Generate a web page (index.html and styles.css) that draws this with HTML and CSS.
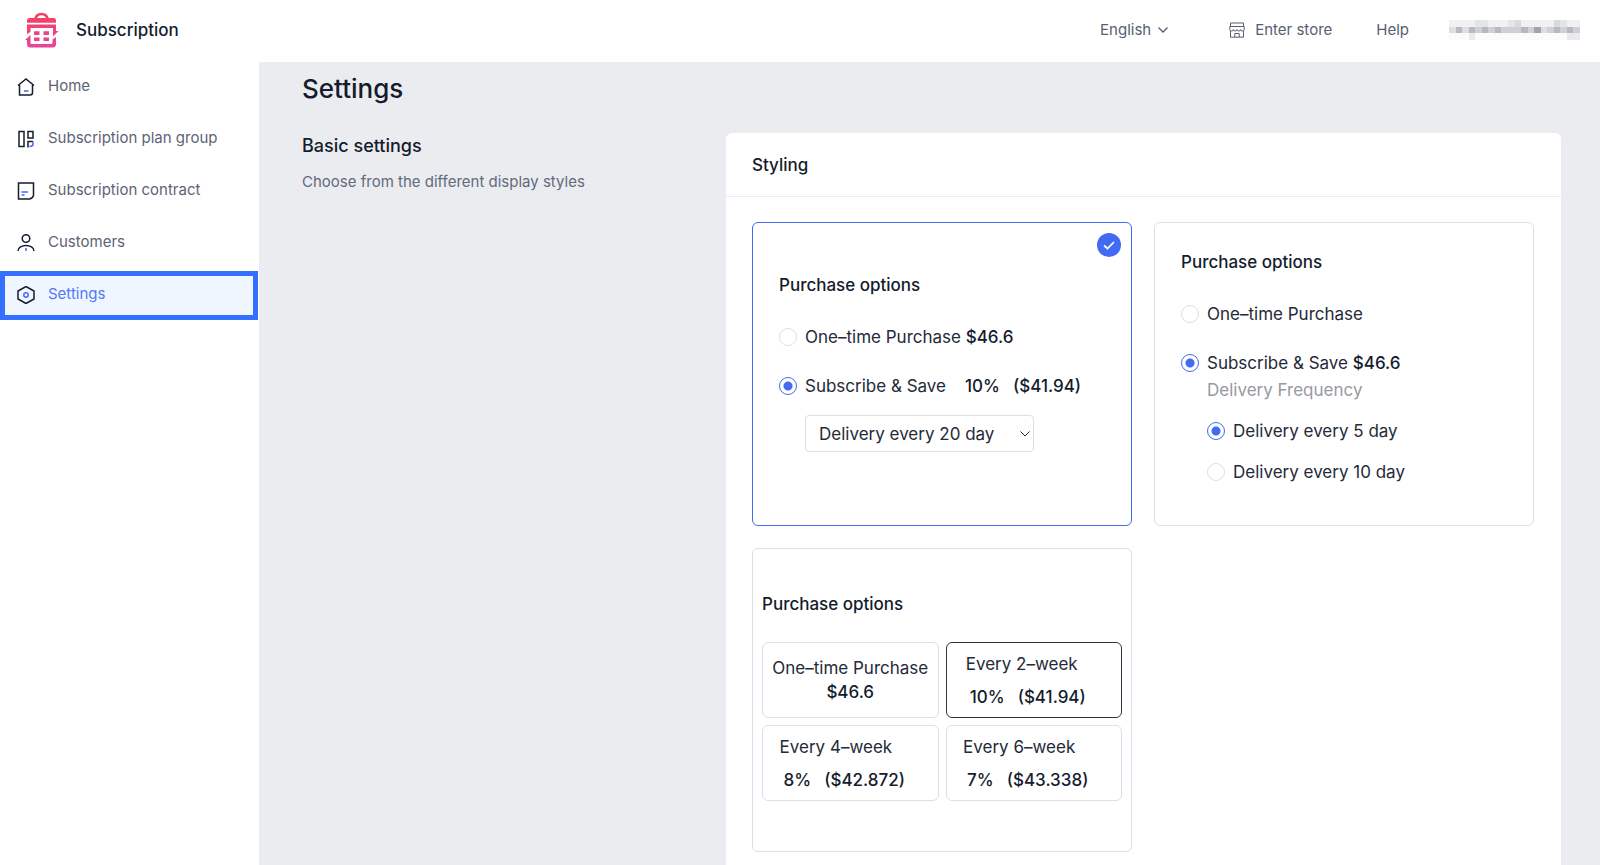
FILE: index.html
```html
<!DOCTYPE html>
<html lang="en">
<head>
<meta charset="utf-8">
<title>Subscription – Settings</title>
<meta name="viewport" content="width=device-width, initial-scale=1">
<link rel="stylesheet" href="styles.css">
</head>
<body>
<header class="topbar">
  <a class="brand" href="#">
    <svg class="brand-logo" viewBox="0 0 34 36" aria-hidden="true">
      <defs>
        <linearGradient id="brand" x1="0" y1="0" x2="0" y2="36" gradientUnits="userSpaceOnUse">
          <stop offset="0" stop-color="#f4425a"/>
          <stop offset="1" stop-color="#e8449a"/>
        </linearGradient>
      </defs>
      <path d="M10 7.500C11 3.500 13.500 2 16.500 2S22 3.500 23 7.500" fill="none" stroke="url(#brand)" stroke-width="2.600"/>
      <g fill="url(#brand)">
        <path d="M4.500 6h24Q31 6 31 8.500V10.800H2V8.500Q2 6 4.500 6z"/>
        <path d="M2 12.500h29v6.500h2.500L28 24.500V16H5.500v4L2 22z"/>
        <path d="M5.500 23v7.800q0 1.200 1.200 1.200h19.600q1.200 0 1.200-1.200V27.500L31 25v7q0 3.500-3.500 3.500h-22Q2 35.500 2 32v-4H0z"/>
        <path d="M9 19.300h5.500V23H9zM18.500 19.300H24V23h-5.500zM9 25.500h5.500V29H9zM18.500 25.500H24V29h-5.500z"/>
      </g>
    </svg>
    <span class="brand-name">Subscription</span>
  </a>
  <nav class="top-links" aria-label="Account">
    <button class="top-link language" type="button">English
      <svg class="chevron" viewBox="0 0 12 12" aria-hidden="true"><path d="M1.500 3.500l4.500 4.500 4.500-4.500"/></svg>
    </button>
    <a class="top-link store" href="#">
      <svg class="store-icon" viewBox="0 0 16 16" aria-hidden="true">
        <path d="M1.500 1h13v3.500h-13zM.8 4.500v3q0 1.500 1.800 1.500t1.800-1.500q0 1.500 1.800 1.500T8 7.500q0 1.500 1.800 1.500t1.800-1.500q0 1.500 1.800 1.500t1.800-1.500v-3zM1.500 9v6.200h13V9M5.800 15v-3.500h4.400V15"/>
      </svg>
      Enter store
    </a>
    <a class="top-link" href="#">Help</a>
    <svg class="account" viewBox="0 0 20 3" preserveAspectRatio="none" shape-rendering="crispEdges" aria-hidden="true">
      <path fill="#f1f1f3" d="M0 0h20v1H0z"/>
      <path fill="#e4e5e8" d="M4 0h2v1H4zM9 0h1v1H9zM17 0h1v1h-1z"/>
      <path fill="#d9dadf" d="M10 0h1v1h-1zM16 0h1v1h-1z"/>
      <path fill="#ced0d5" d="M0 1h20v1H0z"/>
      <path fill="#dddee2" d="M0 1h1v1H0zM2 1h1v1H2zM14 1h1v1h-1z"/>
      <path fill="#b7b9c0" d="M1 1h1v1H1zM3 1h1v1H3zM5 1h1v1H5zM7 1h1v1H7zM11 1h1v1h-1zM16 1h1v1h-1zM18 1h1v1h-1z"/>
      <path fill="#a1a4ac" d="M13 1h1v1h-1z"/>
      <path fill="#fbfbfc" d="M0 2h18v1H0z"/>
      <path fill="#e9eaed" d="M3 2h1v1H3zM18 2h2v1h-2z"/>
    </svg>
  </nav>
</header>
<div class="shell">
  <nav class="sidebar" aria-label="Main">
    <a class="nav-item" href="#">
      <svg class="nav-icon" viewBox="0 0 18 18" aria-hidden="true"><path d="M1 7.500L9 1l8 6.500M2.500 7v10H13q2.500 0 2.500-2.500V7"/><path class="accent" d="M7 13h4.500"/></svg>
      Home
    </a>
    <a class="nav-item" href="#">
      <svg class="nav-icon" viewBox="0 0 18 18" aria-hidden="true"><path d="M2 1.500h5v15H2zM11 1.500h5V8h-5zM11 17.500V11.500h5"/><path class="accent" d="M16 11.500v2.500q0 2.500-3.500 2.500"/></svg>
      Subscription plan group
    </a>
    <a class="nav-item" href="#">
      <svg class="nav-icon" viewBox="0 0 18 18" aria-hidden="true"><path d="M1.500 1h15v12.500q-1 3-4 3.500h-11z"/><path class="accent" d="M4.500 10h6.500M4.500 13h3"/></svg>
      Subscription contract
    </a>
    <a class="nav-item" href="#">
      <svg class="nav-icon" viewBox="0 0 18 18" aria-hidden="true"><circle cx="9" cy="4.500" r="3.800"/><path d="M1 17c0-7.500 16-7.500 16 0"/><path class="accent" d="M9 14v3"/></svg>
      Customers
    </a>
    <a class="nav-item active" href="#" aria-current="page">
      <svg class="nav-icon" viewBox="0 0 18 18" aria-hidden="true"><path d="M9 0.500l8 4.500v8l-8 4.500-8-4.500V5z"/><circle class="accent" cx="9" cy="9" r="2.200"/></svg>
      Settings
    </a>
  </nav>
  <main class="content">
    <h1 class="page-title">Settings</h1>
    <div class="section">
      <div class="section-intro">
        <h2 class="section-title">Basic settings</h2>
        <p class="section-text">Choose from the different display styles</p>
      </div>
      <section class="panel">
        <h2 class="panel-title">Styling</h2>
        <div class="style-grid">
          <article class="style-card selected">
            <span class="check"><svg viewBox="0 0 24 24" aria-hidden="true"><path d="M7 12.500l3.500 3 6.500-6.500"/></svg></span>
            <h3 class="card-title">Purchase options</h3>
            <label class="option"><input class="radio" type="radio" name="first"><span>One–time Purchase <b>$46.6</b></span></label>
            <label class="option"><input class="radio" type="radio" name="first" checked><span>Subscribe &amp; Save</span><b class="saving"><span>10%</span><span>($41.94)</span></b></label>
            <div class="select-wrap">
              <select class="frequency" aria-label="Delivery frequency"><option>Delivery every 20 day</option></select>
              <svg class="select-arrow" viewBox="0 0 12 12" aria-hidden="true"><path d="M1.500 3.500l4.500 4.500 4.500-4.500"/></svg>
            </div>
          </article>
          <article class="style-card">
            <h3 class="card-title">Purchase options</h3>
            <label class="option"><input class="radio" type="radio" name="second"><span>One–time Purchase</span></label>
            <label class="option"><input class="radio" type="radio" name="second" checked><span>Subscribe &amp; Save <b>$46.6</b></span></label>
            <div class="sub-options" role="group" aria-labelledby="freq">
              <p class="sub-title" id="freq">Delivery Frequency</p>
              <label class="sub-option"><input class="radio" type="radio" name="third" checked><span>Delivery every 5 day</span></label>
              <label class="sub-option"><input class="radio" type="radio" name="third"><span>Delivery every 10 day</span></label>
            </div>
          </article>
          <article class="style-card tiled">
            <h3 class="card-title">Purchase options</h3>
            <div class="tiles">
              <button class="tile" type="button"><span class="tile-text centered"><span>One–time Purchase</span><b>$46.6</b></span></button>
              <button class="tile chosen" type="button"><span class="tile-text"><span>Every 2–week</span><b class="saving"><span>10%</span><span>($41.94)</span></b></span></button>
              <button class="tile" type="button"><span class="tile-text"><span>Every 4–week</span><b class="saving"><span>8%</span><span>($42.872)</span></b></span></button>
              <button class="tile" type="button"><span class="tile-text"><span>Every 6–week</span><b class="saving"><span>7%</span><span>($43.338)</span></b></span></button>
            </div>
          </article>
        </div>
      </section>
    </div>
  </main>
</div>
</body>
</html>
```
FILE: styles.css
```css
* { box-sizing: border-box; }
body {
  margin: 0;
  min-height: 100vh;
  display: flex;
  flex-direction: column;
  background: #fff;
  color: #242a38;
  font-family: Inter, "Noto Sans", sans-serif;
  font-size: 17px;
  line-height: 24px;
}
h1, h2, h3, p { margin: 0; font-weight: 500; color: #141c2e; }
b { font-weight: 500; color: #141c2e; }
a { color: inherit; text-decoration: none; }
button { font: inherit; color: inherit; background: none; border: 0; padding: 0; cursor: pointer; }
svg { fill: none; stroke: currentColor; display: block; }

.topbar { display: flex; justify-content: space-between; align-items: center; height: 62px; padding: 0 20px 2px 25px; }
.brand { display: flex; align-items: center; gap: 17px; color: #141c2e; }
.brand-logo { width: 34px; height: 36px; stroke: none; }
.brand-name { font-size: 17px; font-weight: 500; }
.top-links { display: flex; align-items: center; font-size: 15px; color: #565e72; }
.top-link { display: flex; align-items: center; margin-right: 40px; }
.language { gap: 6px; margin-right: 60px; }
.chevron { width: 12px; height: 12px; stroke-width: 1.300; }
.store { gap: 10px; margin-right: 44px; }
.store-icon { width: 16px; height: 16px; }
.account { width: 131px; height: 20px; stroke: none; }

.shell { display: flex; flex: 1; }
.sidebar { flex: 0 0 259px; padding-top: 1px; }
.nav-item {
  display: flex;
  align-items: center;
  gap: 13px;
  width: 258px;
  height: 48px;
  margin-bottom: 4px;
  padding: 0 17px 3px;
  font-size: 15px;
  color: #5c6375;
}
.nav-icon { width: 18px; height: 18px; margin-top: 2px; color: #141c2e; stroke-width: 1.500; }
.accent { stroke: #416bf5; }
.active { height: 49px; border: 5px solid #3370ff; padding: 0 12px 3px; background: #f0f6ff; color: #5279f6; }

.content { flex: 1; min-width: 0; background: #ebecf0; padding: 9px 39px 0 43px; display: flex; flex-direction: column; }
.page-title { font-size: 26px; line-height: 36px; }
.section { display: flex; flex: 1; padding-top: 26px; }
.section-intro { flex: 1; }
.section-title { font-size: 18px; line-height: 26px; }
.section-text { margin-top: 11px; font-size: 15px; font-weight: 400; color: #626a7b; }
.panel { flex: 0 1 835px; background: #fff; border-radius: 6px 6px 0 0; }
.panel-title { font-size: 17px; line-height: 24px; padding: 20px 26px 19px; border-bottom: 1px solid #ebecf0; }
.style-grid { display: grid; grid-template-columns: 1fr 1fr; gap: 22px; padding: 25px 27px 14px 26px; }
.style-card { position: relative; min-height: 304px; padding: 27px 26px 20px; border: 1px solid #dcdfe9; border-radius: 6px; }
.selected { border-color: #416bf5; padding-top: 50px; }
.check { position: absolute; top: 10px; right: 10px; width: 24px; height: 24px; border-radius: 50%; background: #416bf5; color: #fff; }
.check svg { stroke-width: 1.700; }
.card-title { font-size: 17px; line-height: 24px; margin-bottom: 28px; }
.option { display: flex; align-items: center; margin-bottom: 25px; }
.radio { appearance: none; flex: none; width: 18px; height: 18px; margin: 0 8px 0 0; border: 1px solid #dcdfe9; border-radius: 50%; background: #fff; }
.radio:checked { border-color: #416bf5; background: radial-gradient(circle, #416bf5 4px, #fff 5px); }
.saving { display: inline-flex; gap: 13px; }
.option .saving { margin-left: 19px; }
.select-wrap { position: relative; width: 229px; margin: -8px 0 0 26px; }
.frequency { appearance: none; width: 100%; height: 37px; padding: 0 30px 0 13px; border: 1px solid #dcdfe9; border-radius: 4px; background: #fff; color: inherit; font: inherit; }
.select-arrow { position: absolute; right: 3px; top: 13px; width: 12px; height: 12px; }
.sub-options { margin: -22px 0 0 26px; }
.sub-title { font-weight: 400; color: #97999f; margin-bottom: 17px; }
.sub-option { display: flex; align-items: center; margin-bottom: 17px; }
.tiled { padding: 43px 9px 9px; }
.tiled .card-title { margin-bottom: 26px; }
.tiles { display: grid; grid-template-columns: 1fr 1fr; gap: 7px; }
.tile { display: flex; justify-content: center; align-items: center; height: 76px; border: 1px solid #dcdfe9; border-radius: 6px; text-align: left; white-space: nowrap; }
.chosen { border-color: #30343f; }
.tile-text { display: flex; flex-direction: column; gap: 9px; }
.tile .saving { padding: 0 16px 0 4px; }
.centered { align-items: center; gap: 0; }
```
